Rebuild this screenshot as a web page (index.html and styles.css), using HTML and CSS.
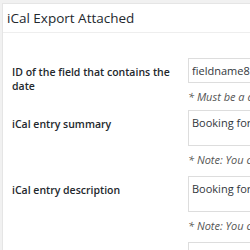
FILE: index.html
```html
<!DOCTYPE html>
<html lang="en">
<head>
  <meta charset="UTF-8">
  <title>iCal Export Attached</title>
  <link rel="stylesheet" href="styles.css">
</head>
<body>
  <div class="postbox">
    <h2 class="hndle">iCal Export Attached</h2>
    <div class="inside">
      <div class="row">
        <label class="label">ID of the field that contains the date</label>
        <div class="field">
          <input type="text" value="fieldname8">
          <p class="note">* Must be a date field in the form</p>
        </div>
      </div>
      <div class="row">
        <label class="label">iCal entry summary</label>
        <div class="field">
          <textarea>Booking for %fieldname1%</textarea>
          <p class="note">* Note: You can use the field tags</p>
        </div>
      </div>
      <div class="row">
        <label class="label">iCal entry description</label>
        <div class="field">
          <textarea>Booking for %fieldname1%</textarea>
          <p class="note">* Note: You can use the field tags</p>
        </div>
      </div>
      <div class="row">
        <label class="label">Time zone</label>
        <div class="field">
          <input type="text" value="">
        </div>
      </div>
    </div>
  </div>
</body>
</html>
```

FILE: styles.css
```css
html, body {
  margin: 0;
  overflow: hidden;
}
body {
  background: #f1f1f1;
  padding: 3px 0 0 2px;
  font-family: "Open Sans", "Noto Sans", sans-serif;
  color: #23282d;
}
.postbox {
  width: 700px;
  background: #fff;
  border: 1px solid #e5e5e5;
  border-right: none;
}
.hndle {
  margin: 0;
  padding: 6px 4px 5px;
  font-size: 13.5px;
  line-height: 17px;
  font-weight: 400;
  border-bottom: 1px solid #eee;
}
.inside {
  padding: 25px 9px 0;
}
.row {
  display: grid;
  grid-template-columns: 176px 1fr;
  padding-bottom: 5px;
}
.label {
  padding-top: 7px;
  padding-right: 6px;
  font-size: 10.5px;
  line-height: 14px;
  font-weight: 600;
}
.field input, .field textarea {
  display: block;
  box-sizing: border-box;
  width: 400px;
  margin: 0;
  border: 1px solid #ddd;
  padding: 4px 3px;
  font-family: "Open Sans", "Noto Sans", sans-serif;
  font-size: 11px;
  line-height: 15px;
  color: #32373c;
  background: #fff;
}
.field input {
  height: 25px;
}
.field textarea {
  height: 36px;
  margin-bottom: 4px;
  resize: none;
}
.note {
  margin: 6px 0 0;
  font-size: 11px;
  line-height: 16px;
  font-style: italic;
  color: #555;
}
.field textarea + .note {
  margin-bottom: 3px;
}
```
